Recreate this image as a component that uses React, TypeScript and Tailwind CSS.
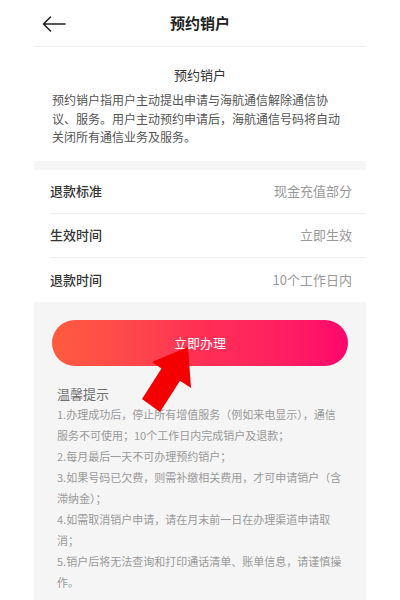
import React from "react";

const rows = [
  { label: "退款标准", value: "现金充值部分" },
  { label: "生效时间", value: "立即生效" },
  { label: "退款时间", value: "10个工作日内" },
];

const tips = [
  "1.办理成功后，停止所有增值服务（例如来电显示），通信服务不可使用；10个工作日内完成销户及退款；",
  "2.每月最后一天不可办理预约销户；",
  "3.如果号码已欠费，则需补缴相关费用，才可申请销户（含滞纳金）；",
  "4.如需取消销户申请，请在月末前一日在办理渠道申请取消；",
  "5.销户后将无法查询和打印通话清单、账单信息，请谨慎操作。",
];

function BackArrow() {
  return (
    <svg width="24" height="16" viewBox="0 0 24 16" fill="none">
      <path d="M1.5 8H23M8.5 1L1.5 8L8.5 15" stroke="#222" strokeWidth="1.6" strokeLinecap="round" strokeLinejoin="round" />
    </svg>
  );
}

export default function App() {
  return (
    <div
      className="min-h-screen bg-white flex justify-center"
      style={{ fontFamily: '"Noto Sans CJK SC", "Noto Sans", sans-serif' }}
    >
      <div className="w-[332px] flex flex-col bg-[#f5f5f5] relative">
        {/* top bar */}
        <div className="h-[47px] bg-white border-b border-[#efefef] grid grid-cols-[1fr_auto_1fr] items-center">
          <div className="pl-[8px] flex items-center pt-[2px]">
            <BackArrow />
          </div>
          <div className="text-[15px] font-semibold text-[#222] leading-[20px]">预约销户</div>
          <div />
        </div>

        {/* intro */}
        <div className="bg-white pt-[18px] pb-[14px] px-[18px]">
          <div className="text-center text-[13px] leading-[20px] text-[#333]">预约销户</div>
          <p className="mt-[6px] text-[12px] leading-[18.5px] text-[#555]">
            预约销户指用户主动提出申请与海航通信解除通信协议、服务。用户主动预约申请后，海航通信号码将自动关闭所有通信业务及服务。
          </p>
        </div>

        {/* details */}
        <div className="mt-[9px] bg-white pl-[16px]">
          {rows.map((r, i) => (
            <div
              key={r.label}
              className={
                "h-[44px] flex items-center justify-between pr-[14px] " +
                (i < rows.length - 1 ? "border-b border-[#efefef]" : "")
              }
            >
              <span className="text-[13px] font-medium text-[#333]">{r.label}</span>
              <span className="text-[13px] text-[#999]">{r.value}</span>
            </div>
          ))}
        </div>

        {/* action + notes */}
        <div className="pt-[18px] pb-[4px]">
          <div className="px-[18px]">
            <button className="w-full h-[46px] rounded-full bg-gradient-to-r from-[#ff5b3e] via-[#ff2f55] to-[#ff046c] text-white text-[13px] flex items-center justify-center">
              立即办理
            </button>
          </div>
          <div className="pl-[23px] pr-[21px] mt-[18px]">
            <div className="text-[13px] leading-[20px] text-[#707070]">温馨提示</div>
            <div className="text-[11px] leading-[21px] text-[#9a9a9a]">
              {tips.map((t) => (
                <p key={t}>{t}</p>
              ))}
            </div>
          </div>
        </div>

        {/* pointer arrow over the button */}
        <svg
          className="absolute left-0 top-0 pointer-events-none"
          width="332"
          height="600"
          viewBox="0 0 332 600"
        >
          <polygon
            points="154,347 118,362 127.5,368.4 108,399 126,412 146,380.7 157,388"
            fill="#f40000"
          />
        </svg>
      </div>
    </div>
  );
}
